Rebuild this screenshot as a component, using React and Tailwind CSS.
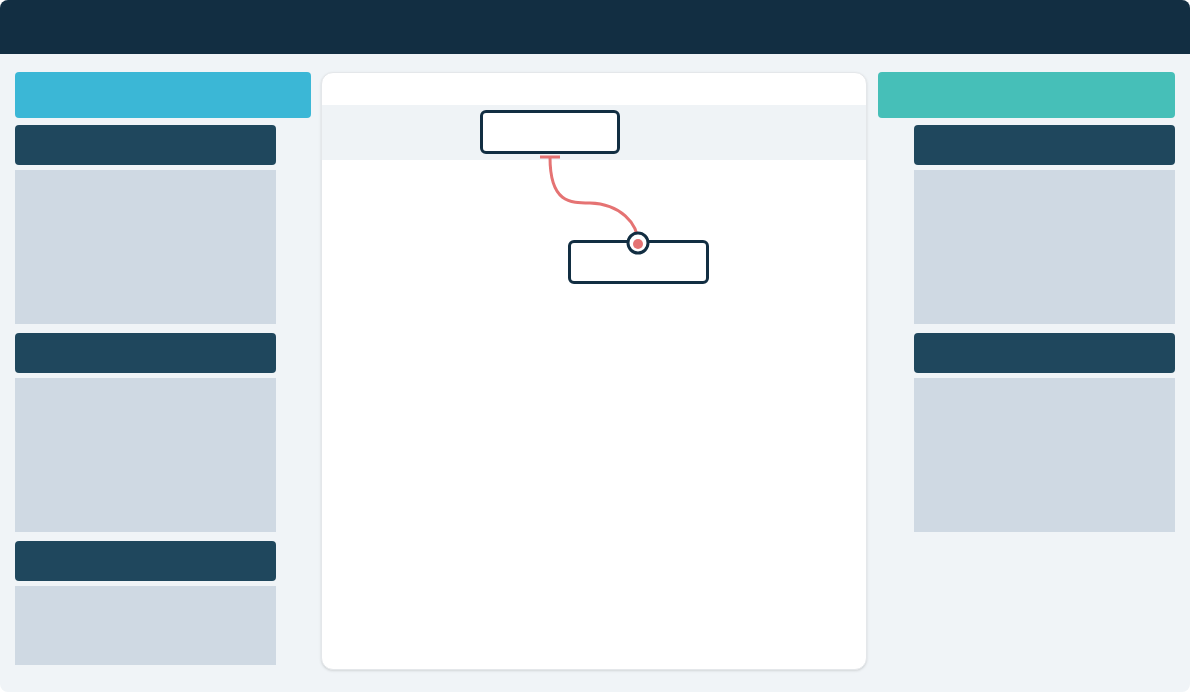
import React from "react";

// --- SIDE CARDS ---

const Card = ({ bodyClass = "h-[154px]" }) => (
  <div className="flex flex-col gap-[5px]">
    <div className="h-[40px] rounded bg-[#1f475d]" />
    <div className={`bg-[#cfd9e3] ${bodyClass}`} />
  </div>
);

// --- CANVAS ---

const Node = ({ className }) => (
  <div
    className={`absolute h-[44px] rounded-md border-[3px] border-[#122e42] bg-white ${className}`}
  />
);

const Canvas = () => (
  <div className="relative flex-1 ml-[10px] mr-[11px] rounded-xl border border-[#e4e7ea] bg-white shadow-sm overflow-hidden">
    <div className="mt-[32px] h-[55px] bg-[#eff3f6]" />
    <Node className="w-[140px] left-[158px] top-[37px]" />
    <Node className="w-[141px] left-[246px] top-[167px]" />
    <svg
      className="absolute inset-0 pointer-events-none"
      width="546"
      height="598"
      viewBox="0 0 546 598"
    >
      <path
        d="M228 84 C228 130 248 130 268 130 C298 131 316 150 316 170"
        fill="none"
        stroke="#e57373"
        strokeWidth="3"
      />
      <line x1="218" y1="84" x2="238" y2="84" stroke="#e57373" strokeWidth="3" />
      <circle cx="316" cy="170" r="10" fill="white" stroke="#122e42" strokeWidth="3" />
      <circle cx="316" cy="171" r="5" fill="#e57373" />
    </svg>
  </div>
);

// --- MAIN PAGE ---

export default function App() {
  return (
    <div className="w-[1190px] h-[692px] rounded-lg overflow-hidden bg-[#f0f4f7] flex flex-col font-['Liberation_Sans',sans-serif]">
      {/* Top bar */}
      <div className="h-[54px] shrink-0 bg-[#122e42]" />

      {/* Body */}
      <div className="flex flex-1 px-[15px] pt-[18px] pb-[22px]">
        {/* Left column */}
        <div className="w-[296px] flex flex-col">
          <div className="h-[46px] rounded bg-[#3bb7d6]" />
          <div className="w-[261px] mt-[7px] flex flex-col gap-[9px]">
            <Card />
            <Card />
            <Card bodyClass="h-[79px]" />
          </div>
        </div>

        <Canvas />

        {/* Right column */}
        <div className="w-[297px] flex flex-col">
          <div className="h-[46px] rounded bg-[#46bfb8]" />
          <div className="w-[261px] ml-auto mt-[7px] flex flex-col gap-[9px]">
            <Card />
            <Card />
          </div>
        </div>
      </div>
    </div>
  );
}
